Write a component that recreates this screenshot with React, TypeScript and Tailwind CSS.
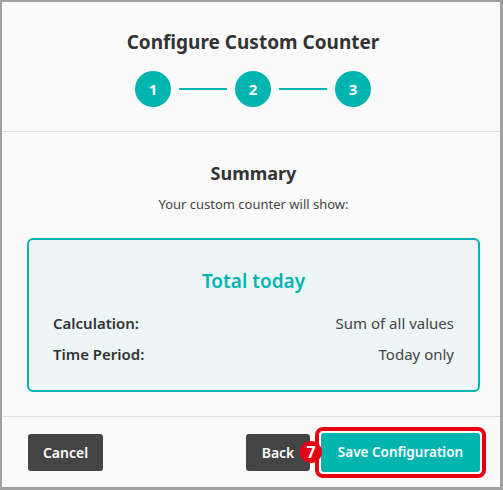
const font = { fontFamily: '"Noto Sans", "Open Sans", sans-serif' };

const Step = ({ n }: { n: number }) => (
  <div className="flex h-9 w-9 items-center justify-center rounded-full bg-[#00b4b0] text-[15px] font-bold text-white">
    {n}
  </div>
);

const Row = ({ label, value }: { label: string; value: string }) => (
  <div className="flex items-center justify-between text-[15px] leading-[20px] text-[#333]">
    <span className="font-semibold">{label}</span>
    <span className="text-[#444]">{value}</span>
  </div>
);

export default function App() {
  return (
    <div
      className="flex h-[490px] w-[503px] flex-col border-2 border-r-[3px] border-b-[3px] border-[#a0a0a0] bg-[#fafafa]"
      style={font}
    >
      {/* header */}
      <div className="flex h-[130px] flex-col items-center border-b border-[#dddddd] pl-[4px] pt-[27px]">
        <h1 className="text-[19px] font-bold leading-[26px] text-[#333]">Configure Custom Counter</h1>
        <div className="mt-[16px] flex items-center gap-2">
          <Step n={1} />
          <div className="h-[2px] w-12 bg-[#00b4b0]" />
          <Step n={2} />
          <div className="h-[2px] w-12 bg-[#00b4b0]" />
          <Step n={3} />
        </div>
      </div>

      {/* body */}
      <div className="flex h-[285px] flex-col border-b border-[#dddddd] pl-[25px] pr-[20px] pt-[28px]">
        <h2 className="text-center text-[18px] font-bold leading-[26px] text-[#333]">Summary</h2>
        <p className="mt-[9px] text-center text-[13px] leading-[18px] text-[#444]">Your custom counter will show:</p>
        <div className="mt-[25px] flex h-[154px] flex-col rounded-[6px] border-2 border-[#00b4b0] bg-[#edf5f7] px-6 pt-[28px]">
          <div className="text-center text-[19px] font-semibold leading-[26px] text-[#00b4b0]">Total today</div>
          <div className="mt-[19px] flex flex-col gap-[11px]">
            <Row label="Calculation:" value="Sum of all values" />
            <Row label="Time Period:" value="Today only" />
          </div>
        </div>
      </div>

      {/* footer */}
      <div className="flex flex-1 items-center justify-between pl-[26px] pr-[14px]">
        <button className="h-[37px] w-[75px] rounded-[3px] bg-[#444] text-[14px] font-semibold text-white">
          Cancel
        </button>
        <div className="flex items-center">
          <button className="h-[37px] w-[64px] rounded-[3px] bg-[#444] text-[14px] font-semibold text-white">
            Back
          </button>
          <div className="relative ml-[5px] rounded-[8px] border-4 border-[#e60012] p-[2px]">
            <button className="h-[39px] w-[159px] rounded-[3px] bg-[#00b4b0] text-[13.5px] font-semibold text-white">
              Save Configuration
            </button>
            <span className="absolute left-[-19px] top-1/2 flex h-[22px] w-[22px] -translate-y-1/2 items-center justify-center rounded-full bg-[#e60012] text-[16px] font-bold text-white">
              7
            </span>
          </div>
        </div>
      </div>
    </div>
  );
}
